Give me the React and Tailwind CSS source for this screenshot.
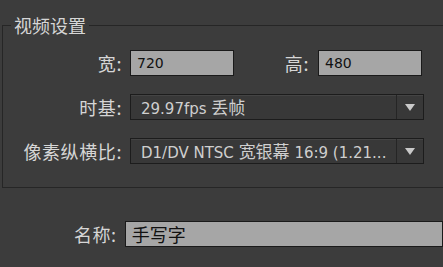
import { useState } from "react";

const font = {
  fontFamily: '"Noto Sans CJK SC", "Noto Sans", sans-serif',
};

const latin = {
  fontFamily: '"DejaVu Sans", "Noto Sans CJK SC", sans-serif',
};

function Label({ children, className = "" }) {
  return (
    <span className={"text-[18px] leading-[26px] tracking-[0.6px] text-[#d6d6d6] " + className}>
      {children}
    </span>
  );
}

function TextBox({ value, className = "" }) {
  return (
    <div
      className={
        "h-[26px] border border-[#1a1a1a] bg-[#a6a6a6] pl-[6px] leading-[24px] text-[#111] " +
        className
      }
    >
      {value}
    </div>
  );
}

function Select({ children }) {
  return (
    <div className="flex h-[26px] w-[294px] border border-[#1c1c1c] bg-[#383838] shadow-[inset_0_1px_0_#444]">
      <div
        className="flex-1 truncate whitespace-nowrap pl-[10px] text-[15px] leading-[24px] text-[#cfcfcf]"
        style={latin}
      >
        {children}
      </div>
      <div className="flex w-[27px] items-center justify-center border-l border-[#252525]">
        <svg width="10" height="7" viewBox="0 0 10 7">
          <path d="M0 0 L10 0 L5 7 Z" fill="#c9c9c9" />
        </svg>
      </div>
    </div>
  );
}

function Cjk({ children }) {
  return (
    <span className="text-[17px]" style={font}>
      {children}
    </span>
  );
}

export default function App() {
  const [name] = useState("手写字");

  return (
    <div
      className="h-[267px] w-[443px] overflow-hidden bg-[#3c3c3c]"
      style={font}
    >
      <fieldset className="ml-[2px] mt-[16px] w-[470px] border border-[#262626] px-0 pb-[23px] pt-0">
        <legend className="ml-[8px] px-[3px] text-[18px] leading-[18px] text-[#d6d6d6]">
          视频设置
        </legend>

        <div className="mt-[16px] flex flex-col gap-[18px]">
          <div className="flex items-center">
            <Label className="w-[119px] text-right">宽:</Label>
            <div className="ml-[8px]" style={latin}>
              <TextBox value="720" className="w-[104px] text-[14px]" />
            </div>
            <Label className="ml-[41px] w-[34px] text-right">高:</Label>
            <div className="ml-[9px]" style={latin}>
              <TextBox value="480" className="w-[104px] text-[14px]" />
            </div>
          </div>

          <div className="flex items-center">
            <Label className="w-[119px] text-right">时基:</Label>
            <div className="ml-[8px]">
              <Select>
                29.97fps <Cjk>丢帧</Cjk>
              </Select>
            </div>
          </div>

          <div className="flex items-center">
            <Label className="w-[119px] text-right">像素纵横比:</Label>
            <div className="ml-[8px]">
              <Select>
                D1/DV NTSC <Cjk>宽银幕</Cjk> 16:9 (1.21...
              </Select>
            </div>
          </div>
        </div>
      </fieldset>

      <div className="ml-[2px] mt-[33px] flex items-center">
        <Label className="w-[119px] text-right">名称:</Label>
        <TextBox value={name} className="ml-[8px] w-[330px] text-[18px]" />
      </div>
    </div>
  );
}
